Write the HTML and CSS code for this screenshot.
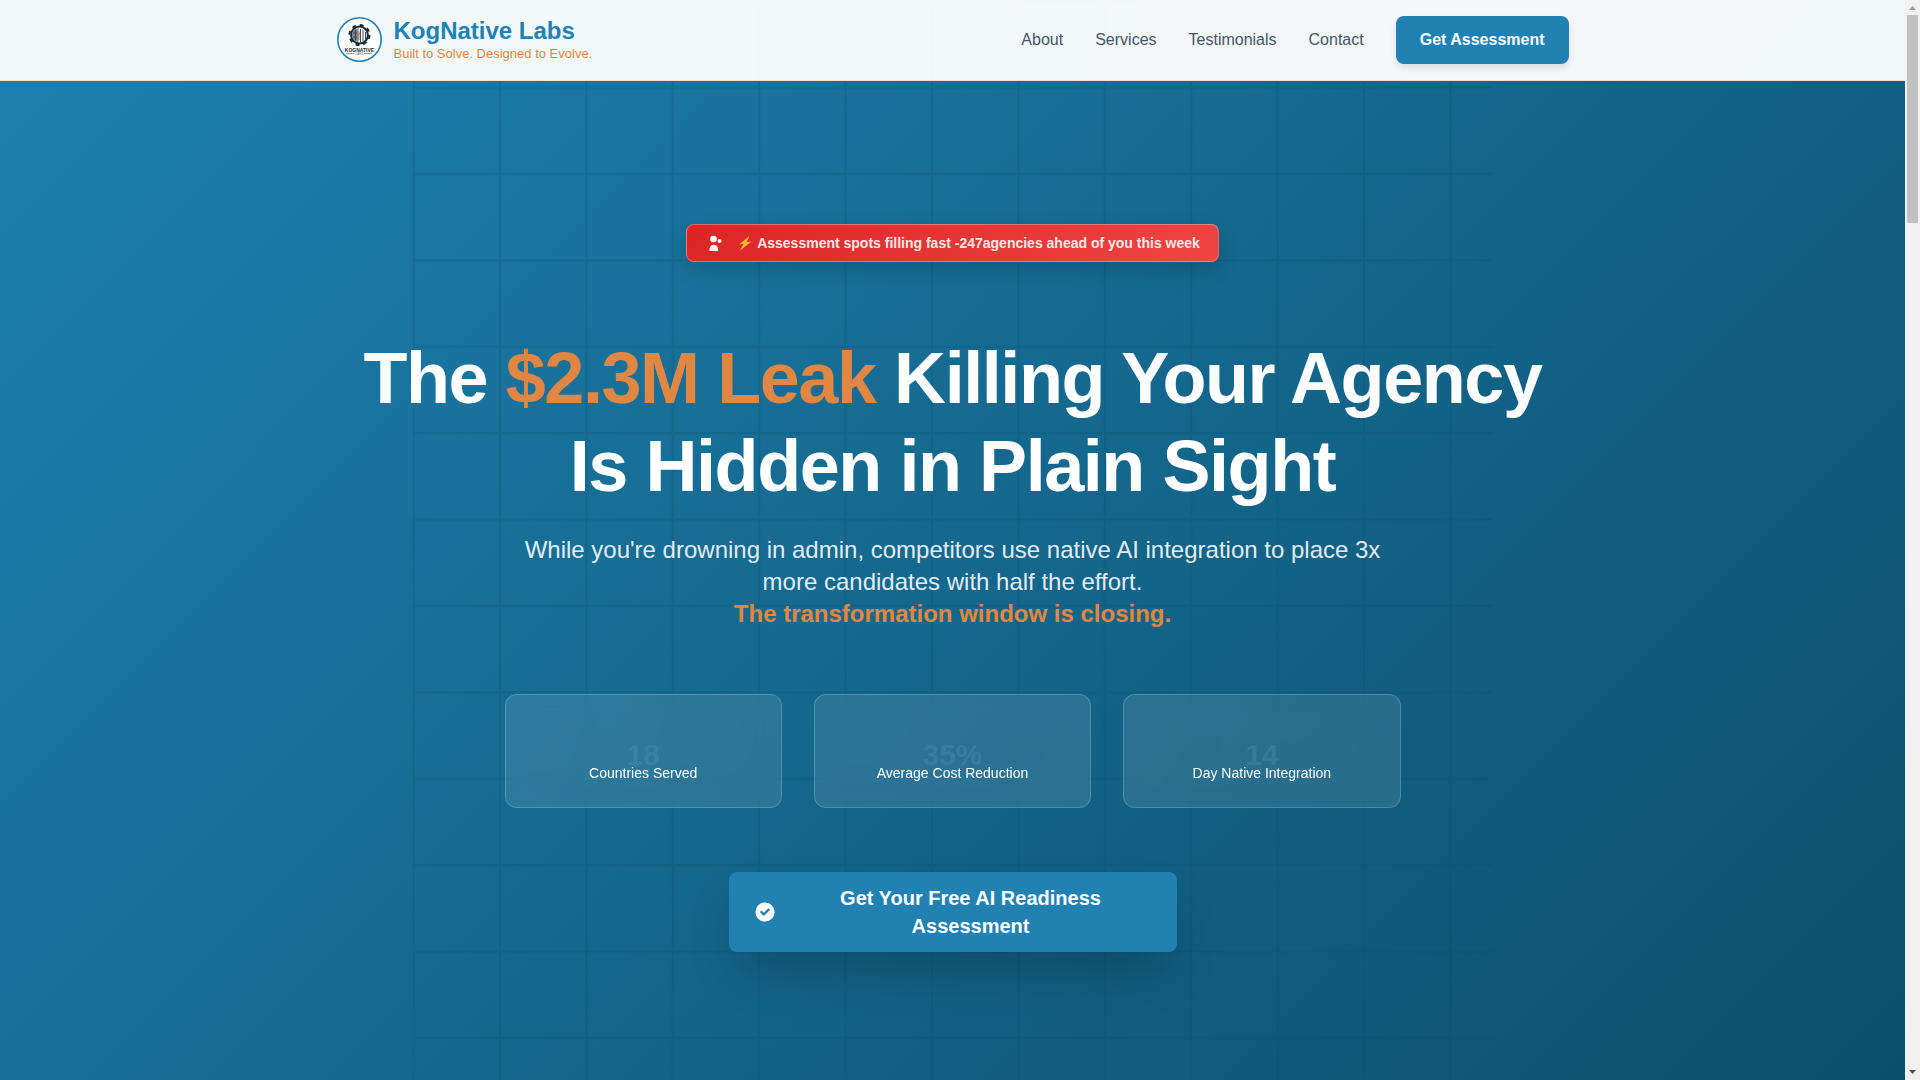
FILE: index.html
```html
<!DOCTYPE html>
<html lang="en">
<head>
<meta charset="utf-8">
<meta name="viewport" content="width=device-width, initial-scale=1">
<title>KogNative Labs</title>
<link rel="stylesheet" href="styles.css">
</head>
<body>
<div class="page">
  <header class="header">
    <div class="header-inner">
      <a class="brand" href="#home">
        <svg class="logo" viewBox="0 0 45 45" aria-hidden="true">
          <circle cx="22.5" cy="22.5" r="21.7" fill="#fff" stroke="#2081b2" stroke-width="1.6"/>
          <circle cx="22.500" cy="18" r="8.400" fill="#fff" stroke="#172b3b" stroke-width="2"/>
          <circle cx="22.500" cy="18" r="10" fill="none" stroke="#172b3b" stroke-width="2" stroke-dasharray="3.900 3.950"/>
          <path d="M21.500 11.500c-4-.5-7 3-6.500 7 .3 3 3 6.500 6.500 6.500z" fill="#7c8790"/>
          <path d="M23.500 12v13M26 13v11M28.500 15v7M18.500 13v10M16 16h4M16 20h4" stroke="#3a4b59" stroke-width="1" fill="none"/>
          <path d="M22 14v9M20.500 17h3" stroke="#b56d45" stroke-width="1"/>
          <text x="22.500" y="34.600" text-anchor="middle" class="logo-name">KOGNATIVE</text>
          <path d="M9 36.500h8M27 36.500h8" stroke="#826c61" stroke-width=".7"/>
          <text x="22.500" y="37.800" text-anchor="middle" class="logo-sub">LABS</text>
        </svg>
        <span class="brand-text">
          <span class="brand-name">KogNative Labs</span>
          <span class="brand-tag">Built to Solve. Designed to Evolve.</span>
        </span>
      </a>
      <nav class="nav">
        <a href="#about">About</a>
        <a href="#services">Services</a>
        <a href="#testimonials">Testimonials</a>
        <a href="#contact">Contact</a>
        <button class="nav-cta" type="button">Get Assessment</button>
      </nav>
    </div>
  </header>
  <main class="hero">
    <svg class="grid-lines" viewBox="0 0 100 100" aria-hidden="true">
      <defs>
        <pattern id="grid" width="8" height="8" patternUnits="userSpaceOnUse">
          <path d="M8 0H0V8" fill="none" stroke="#0b4f6c" stroke-width=".4"/>
        </pattern>
      </defs>
      <rect width="100" height="100" fill="url(#grid)"/>
    </svg>
    <div class="hero-content">
      <div class="badge">
        <svg class="badge-icon" viewBox="0 0 20 20" aria-hidden="true">
          <circle cx="8.500" cy="6" r="3.300" fill="#fff"/>
          <circle cx="14.500" cy="8" r="2" fill="#fff"/>
          <path d="M4.500 18v-2a4.300 4.300 0 0 1 8.600 0v2z" fill="#fff"/>
        </svg>
        <span class="badge-text"><svg class="bolt" viewBox="0 0 14 16" aria-hidden="true"><path d="M11.500 1L1 9.500l4.500-.8L2 15.500 13.500 6.500l-5 .7z" fill="#fbb829"/></svg>Assessment spots filling fast -247agencies ahead of you this week</span>
      </div>
      <h1 class="title">The <span class="accent">$2.3M Leak</span> Killing Your Agency Is Hidden in Plain Sight</h1>
      <p class="lead">While you're drowning in admin, competitors use native AI integration to place 3x more candidates with half the effort.<br><strong class="accent">The transformation window is closing.</strong></p>
      <div class="stats">
        <div class="stat"><span class="stat-value">18</span><span class="stat-label">Countries Served</span></div>
        <div class="stat"><span class="stat-value">35%</span><span class="stat-label">Average Cost Reduction</span></div>
        <div class="stat"><span class="stat-value">14</span><span class="stat-label">Day Native Integration</span></div>
      </div>
      <button class="cta" type="button">
        <svg class="cta-icon" viewBox="0 0 20 20" aria-hidden="true"><path fill="#fff" fill-rule="evenodd" d="M10 18a8 8 0 1 0 0-16 8 8 0 0 0 0 16zm3.707-9.293a1 1 0 0 0-1.414-1.414L9 10.586 7.707 9.293a1 1 0 0 0-1.414 1.414l2 2a1 1 0 0 0 1.414 0l4-4z"/></svg>
        <span class="cta-text">Get Your Free AI Readiness Assessment</span>
      </button>
    </div>
  </main>
</div>
<div class="scrollbar" aria-hidden="true">
  <svg class="arrow" viewBox="0 0 15 15"><path d="M4 10L7.500 6 11 10z" fill="#a0a0a0"/></svg>
  <div class="thumb"></div>
  <svg class="arrow arrow-down" viewBox="0 0 15 15"><path d="M4 5L7.500 9 11 5z" fill="#505050"/></svg>
</div>
</body>
</html>
```
FILE: styles.css
```css
* { box-sizing: border-box; }

body {
  margin: 0;
  display: flex;
  height: 100vh;
  overflow: hidden;
  font-family: "Liberation Sans", Arial, sans-serif;
  font-size: 16px;
  line-height: 24px;
}

a { color: inherit; text-decoration: none; }
button { border: 0; font: inherit; color: #fff; background: #2081b2; cursor: pointer; }
.accent { color: #e28743; }

.page { position: relative; flex: 1; min-width: 0; }

.header {
  position: absolute;
  inset: 0 0 auto;
  z-index: 2;
  background: rgba(255, 255, 255, .95);
  border-bottom: 1px solid #f1e2d5;
}
.header-inner {
  max-width: 1280px;
  min-height: 80px;
  margin: 0 auto;
  padding: 0 24px;
  display: flex;
  align-items: center;
  justify-content: space-between;
}
.brand { display: flex; align-items: flex-start; gap: 12px; }
.logo { width: 45px; height: 45px; }
.logo-name { font-size: 5px; font-weight: 700; fill: #172b3b; }
.logo-sub { font-size: 3px; fill: #66717a; }
.brand-text { display: flex; flex-direction: column; }
.brand-name { font-size: 24px; line-height: 28px; font-weight: 700; color: #2081b2; }
.brand-tag { font-size: 13px; line-height: 18px; color: #e28743; }
.nav { display: flex; align-items: center; gap: 32px; color: #475569; }
.nav-cta {
  height: 48px;
  padding: 0 24px;
  border-radius: 8px;
  font-weight: 700;
  box-shadow: 0 4px 6px rgba(0, 0, 0, .1);
}

.hero {
  position: relative;
  min-height: 100vh;
  padding: 224px 24px 0;
  background: linear-gradient(135deg, #1e81b0, #0b4f6c);
  color: #fff;
}
.grid-lines { position: absolute; inset: 0; width: 100%; height: 100%; opacity: .22; }
.hero-content {
  position: relative;
  max-width: 1232px;
  margin: 0 auto;
  display: flex;
  flex-direction: column;
  align-items: center;
  text-align: center;
}
.badge {
  display: flex;
  align-items: center;
  gap: 12px;
  height: 38px;
  padding: 0 18px;
  border: 1px solid rgba(255, 255, 255, .3);
  border-radius: 8px;
  background: linear-gradient(135deg, #dc2626, #ef4444);
  box-shadow: 0 8px 20px rgba(0, 0, 0, .15);
  font-size: 14px;
  font-weight: 700;
  color: #fde8e8;
}
.badge-icon { width: 20px; height: 20px; }
.badge-text { display: flex; align-items: center; gap: 4px; }
.bolt { width: 16px; height: 16px; }
.title {
  margin: 72px 0 0;
  font-size: 72px;
  line-height: 88px;
  font-weight: 700;
  letter-spacing: -.02em;
}
.lead {
  max-width: 896px;
  margin: 24px 0 0;
  font-size: 24px;
  line-height: 32px;
  color: rgba(255, 255, 255, .9);
}
.stats {
  width: 100%;
  max-width: 896px;
  margin-top: 64px;
  display: grid;
  grid-template-columns: repeat(3, 1fr);
  gap: 32px;
}
.stat {
  display: flex;
  flex-direction: column;
  padding: 52px 24px 24px;
  border: 1px solid rgba(255, 255, 255, .2);
  border-radius: 12px;
  background: rgba(255, 255, 255, .1);
  backdrop-filter: blur(10px);
}
.stat-value { font-size: 30px; line-height: 16px; font-weight: 700; color: rgba(82, 150, 180, .32); }
.stat-label { font-size: 14px; line-height: 20px; }
.cta {
  width: 100%;
  max-width: 448px;
  min-height: 80px;
  margin-top: 64px;
  padding: 12px 24px;
  display: flex;
  align-items: center;
  gap: 12px;
  border-radius: 8px;
  font-size: 20px;
  line-height: 28px;
  font-weight: 700;
  box-shadow: 0 25px 50px -12px rgba(0, 0, 0, .25);
}
.cta-icon { width: 24px; height: 24px; flex: none; }
.cta-text { flex: 1; }

.scrollbar { width: 15px; flex: none; display: flex; flex-direction: column; background: #f1f1f1; }
.arrow { width: 15px; height: 15px; }
.arrow-down { margin-top: auto; }
.thumb { height: 208px; margin: 0 2px; background: #c1c1c1; }
```
